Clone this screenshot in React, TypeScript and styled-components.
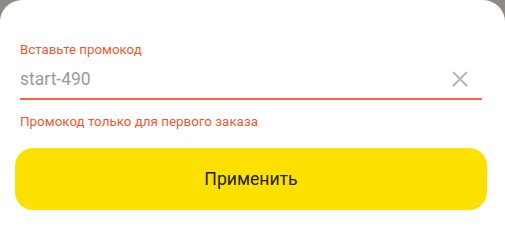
import React from 'react';
import styled, { createGlobalStyle } from 'styled-components';

const GlobalStyle = createGlobalStyle`
    html, body {
        margin: 0;
        padding: 0;
        background: #8d8b84;
        font-family: Roboto, "Noto Sans", sans-serif;
    }
`

const App = () => {
    return (
        <>
            <GlobalStyle />
            <StSheet>
                <StField>
                    <StLabel>Вставьте промокод</StLabel>
                    <StInputRow>
                        <StInput defaultValue="start-490" readOnly />
                        <StClear aria-label="Очистить">
                            <svg width="16" height="16" viewBox="0 0 16 16">
                                <path d="M1.5 1.5L14.5 14.5M14.5 1.5L1.5 14.5" stroke="#b3b3b3" strokeWidth="1.8" strokeLinecap="round" />
                            </svg>
                        </StClear>
                    </StInputRow>
                    <StHint>Промокод только для первого заказа</StHint>
                </StField>
                <StButton>Применить</StButton>
            </StSheet>
        </>
    );
};

const StSheet = styled.div`
    box-sizing: border-box;
    width: 505px;
    height: 235px;
    background: #fff;
    border-radius: 22px 22px 0 0;
    padding: 42px 18px 0 15px;
    display: flex;
    flex-direction: column;
`

const StField = styled.div`
    display: flex;
    flex-direction: column;
    padding: 0 5px;
`

const StLabel = styled.div`
    font-size: 13.3px;
    line-height: 16px;
    color: #f0592d;
`

const StInputRow = styled.div`
    display: flex;
    align-items: center;
    height: 42px;
    padding-top: 2px;
    box-sizing: border-box;
    border-bottom: 2px solid #f5673a;
`

const StInput = styled.input`
    flex: 1;
    border: none;
    outline: none;
    padding: 0;
    background: transparent;
    font-family: inherit;
    font-size: 17.5px;
    color: #9a9a9a;
`

const StClear = styled.button`
    border: none;
    background: none;
    padding: 0;
    margin-right: 14px;
    display: flex;
    align-items: center;
    justify-content: center;
    width: 16px;
    height: 16px;
`

const StHint = styled.div`
    margin-top: 14px;
    font-size: 13.4px;
    line-height: 16px;
    color: #f0592d;
`

const StButton = styled.button`
    margin-top: 18px;
    height: 62px;
    border: none;
    border-radius: 18px;
    background: #fce000;
    font-family: inherit;
    font-size: 17.6px;
    color: #21201f;
    cursor: pointer;
`

export default App;
